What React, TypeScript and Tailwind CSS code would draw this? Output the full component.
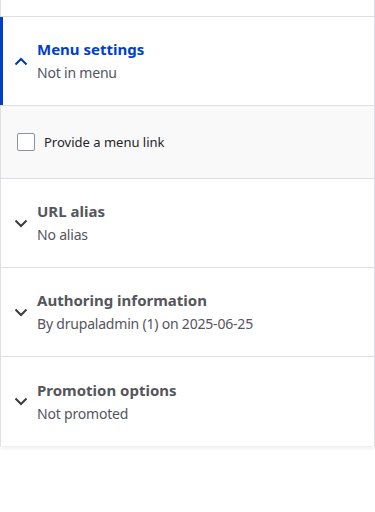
import React from "react";

const Chevron = ({ up, color }: { up?: boolean; color: string }) => (
  <svg width="14" height="9" viewBox="0 0 14 9" className="shrink-0">
    <path
      d={up ? "M1.5 7.5 L7 2 L12.5 7.5" : "M1.5 1.5 L7 7 L12.5 1.5"}
      fill="none"
      stroke={color}
      strokeWidth="2"
    />
  </svg>
);

const Section = ({
  title,
  sub,
  active,
  last,
}: {
  title: string;
  sub: string;
  active?: boolean;
  last?: boolean;
}) => (
  <div
    className={`relative flex items-center h-[89px] pl-[13px] ${
      last ? "h-[88px]" : "border-b border-[#dedfe4]"
    }`}
  >
    {active && (
      <span className="absolute left-[-1px] top-0 bottom-0 w-[3px] bg-[#003ecc]" />
    )}
    <div className="w-[23px] flex items-center">
      <Chevron up={active} color={active ? "#0036b1" : "#3b3c40"} />
    </div>
    <div className="flex flex-col">
      <div
        className={`text-[15px] font-bold leading-[24px] ${
          active ? "text-[#003ecc]" : "text-[#55565b]"
        }`}
      >
        {title}
      </div>
      <div className="text-[14px] leading-[24px] text-[#545560] tracking-[-0.2px]">{sub}</div>
    </div>
  </div>
);

export default function App() {
  return (
    <div
      className="w-[375px] h-[512px] bg-white"
      style={{ fontFamily: '"Noto Sans", sans-serif' }}
    >
      <div className="border-x border-[#dedfe4] shadow-[0_2px_4px_rgba(0,0,0,0.08)]">
        <div className="h-[17px] border-b border-[#dedfe4]" />
        <Section title="Menu settings" sub="Not in menu" active />
        <div className="h-[73px] bg-[#f9f9f9] border-b border-[#dedfe4] flex items-center pl-[16px] gap-[9px]">
          <div className="w-[18px] h-[18px] rounded-[2px] border border-[#8e929c] bg-white" />
          <span className="text-[13px] text-[#232429] pt-[2px]">Provide a menu link</span>
        </div>
        <Section title="URL alias" sub="No alias" />
        <Section title="Authoring information" sub="By drupaladmin (1) on 2025-06-25" />
        <Section title="Promotion options" sub="Not promoted" last />
      </div>
    </div>
  );
}
